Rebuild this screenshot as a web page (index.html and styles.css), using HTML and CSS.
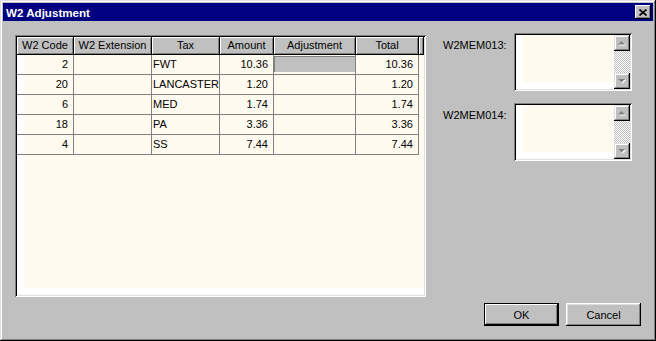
FILE: index.html
```html
<!DOCTYPE html>
<html lang="en">
<head>
    <meta charset="UTF-8">
    <title>W2 Adjustment</title>
    <link rel="stylesheet" href="styles.css">
</head>
<body>
    <div class="window">
        <div class="titlebar">
            <span class="title">W2 Adjustment</span>
            <div class="close-btn">
                <svg width="8" height="7" viewBox="0 0 8 7">
                    <path d="M0.5 0.5 L7.5 6.5 M7.5 0.5 L0.5 6.5" stroke="#000" stroke-width="1.6" fill="none"/>
                </svg>
            </div>
        </div>

        <div class="client">
            <div class="main-row">
                <div class="grid-frame">
                    <div class="grid">
                        <div class="head">W2 Code</div>
                        <div class="head">W2 Extension</div>
                        <div class="head">Tax</div>
                        <div class="head">Amount</div>
                        <div class="head">Adjustment</div>
                        <div class="head">Total</div>
                        <div class="head filler"></div>

                        <div class="cell num">2</div>
                        <div class="cell"></div>
                        <div class="cell text">FWT</div>
                        <div class="cell num">10.36</div>
                        <div class="cell edit"><div class="edit-box"></div></div>
                        <div class="cell num">10.36</div>
                        <div class="blank"></div>

                        <div class="cell num">20</div>
                        <div class="cell"></div>
                        <div class="cell text">LANCASTER</div>
                        <div class="cell num">1.20</div>
                        <div class="cell"></div>
                        <div class="cell num">1.20</div>
                        <div class="blank"></div>

                        <div class="cell num">6</div>
                        <div class="cell"></div>
                        <div class="cell text">MED</div>
                        <div class="cell num">1.74</div>
                        <div class="cell"></div>
                        <div class="cell num">1.74</div>
                        <div class="blank"></div>

                        <div class="cell num">18</div>
                        <div class="cell"></div>
                        <div class="cell text">PA</div>
                        <div class="cell num">3.36</div>
                        <div class="cell"></div>
                        <div class="cell num">3.36</div>
                        <div class="blank"></div>

                        <div class="cell num">4</div>
                        <div class="cell"></div>
                        <div class="cell text">SS</div>
                        <div class="cell num">7.44</div>
                        <div class="cell"></div>
                        <div class="cell num">7.44</div>
                        <div class="blank"></div>
                    </div>
                </div>

                <div class="memo-panel">
                    <div class="memo-row">
                        <span class="memo-label">W2MEM013:</span>
                        <div class="memo">
                            <div class="memo-text"></div>
                            <div class="scrollbar">
                                <div class="scroll-btn">
                                    <svg width="8" height="5" viewBox="0 0 8 5">
                                        <polygon points="4.5,1 8,4.5 1,4.5" fill="#fff"/>
                                        <polygon points="3.5,0 7,3.5 0,3.5" fill="#808080"/>
                                    </svg>
                                </div>
                                <div class="scroll-track"></div>
                                <div class="scroll-btn">
                                    <svg width="8" height="5" viewBox="0 0 8 5">
                                        <polygon points="1,1 8,1 4.5,4.5" fill="#fff"/>
                                        <polygon points="0,0 7,0 3.5,3.5" fill="#808080"/>
                                    </svg>
                                </div>
                            </div>
                        </div>
                    </div>
                    <div class="memo-row">
                        <span class="memo-label">W2MEM014:</span>
                        <div class="memo">
                            <div class="memo-text"></div>
                            <div class="scrollbar">
                                <div class="scroll-btn">
                                    <svg width="8" height="5" viewBox="0 0 8 5">
                                        <polygon points="4.5,1 8,4.5 1,4.5" fill="#fff"/>
                                        <polygon points="3.5,0 7,3.5 0,3.5" fill="#808080"/>
                                    </svg>
                                </div>
                                <div class="scroll-track"></div>
                                <div class="scroll-btn">
                                    <svg width="8" height="5" viewBox="0 0 8 5">
                                        <polygon points="1,1 8,1 4.5,4.5" fill="#fff"/>
                                        <polygon points="0,0 7,0 3.5,3.5" fill="#808080"/>
                                    </svg>
                                </div>
                            </div>
                        </div>
                    </div>
                </div>
            </div>

            <div class="button-row">
                <button class="btn btn-default">OK</button>
                <button class="btn">Cancel</button>
            </div>
        </div>
    </div>
</body>
</html>
```

FILE: styles.css
```css
body {
    margin: 0;
    padding: 0;
    background-color: #c0c0c0;
}

.window {
    width: 656px;
    height: 341px;
    box-sizing: border-box;
    padding: 3px;
    background-color: #c0c0c0;
    box-shadow: inset -1px -1px #000, inset 1px 1px #dfdfdf, inset -2px -2px #808080, inset 2px 2px #fff;
    display: flex;
    flex-direction: column;
    font-family: "Liberation Sans", Arial, sans-serif;
    font-size: 11px;
    color: #000;
}

.titlebar {
    height: 18px;
    background-color: #000080;
    display: flex;
    align-items: center;
    justify-content: space-between;
    padding: 0 2px 0 3px;
}

.title {
    color: #fff;
    font-weight: bold;
    font-size: 11.6px;
}

.close-btn {
    width: 16px;
    height: 14px;
    box-sizing: border-box;
    background-color: #c0c0c0;
    box-shadow: inset -1px -1px #000, inset 1px 1px #fff, inset -2px -2px #808080;
    display: flex;
    justify-content: center;
    align-items: center;
}

.client {
    flex: 1;
    display: flex;
    flex-direction: column;
    padding: 12px;
}

.main-row {
    display: flex;
    height: 264px;
}

/* grid */

.grid-frame {
    margin-top: 2px;
    width: 411px;
    height: 262px;
    box-sizing: border-box;
    padding: 2px;
    box-shadow: inset 1px 1px #808080, inset -1px -1px #fff, inset 2px 2px #000, inset -2px -2px #dfdfdf;
}

.grid {
    height: 100%;
    display: grid;
    grid-template-columns: 57px 78px 68px 54px 82px 63px 5px;
    grid-template-rows: 18px repeat(5, 20px);
    align-content: start;
    background: linear-gradient(#fffaef, #fffaef) 7px 0 / calc(100% - 7px) calc(100% - 7px) no-repeat, #fff;
}

.head {
    box-sizing: border-box;
    background-color: #c0c0c0;
    border-right: 1px solid #000;
    border-bottom: 1px solid #000;
    box-shadow: inset 1px 1px #fff, inset -1px -1px #808080;
    text-align: center;
    line-height: 17px;
}

.cell {
    box-sizing: border-box;
    border-right: 1px solid #808080;
    border-bottom: 1px solid #808080;
    line-height: 19px;
    white-space: nowrap;
    overflow: hidden;
}

.num {
    text-align: right;
    padding-right: 5px;
}

.text {
    padding-left: 1px;
}

.edit-box {
    height: 16px;
    margin-top: 1px;
    background-color: #c0c0c0;
    box-shadow: inset 1px 1px #808080;
}

/* memo fields */

.memo-panel {
    margin-left: 17px;
    display: flex;
    flex-direction: column;
    gap: 12px;
}

.memo-row {
    display: flex;
}

.memo-label {
    width: 71px;
    padding-top: 6px;
    line-height: 13px;
}

.memo {
    width: 118px;
    height: 58px;
    box-sizing: border-box;
    padding: 2px;
    box-shadow: inset 1px 1px #808080, inset -1px -1px #fff, inset 2px 2px #000, inset -2px -2px #dfdfdf;
    display: flex;
}

.memo-text {
    flex: 1;
    background: linear-gradient(#fffaef, #fffaef) 7px 0 / calc(100% - 7px) calc(100% - 7px) no-repeat, #fff;
}

.scrollbar {
    width: 16px;
    display: flex;
    flex-direction: column;
    background: repeating-conic-gradient(#c0c0c0 0 25%, #fff 0 50%) 0 0 / 2px 2px;
}

.scroll-btn {
    height: 16px;
    background-color: #c0c0c0;
    box-shadow: inset -1px -1px #000, inset 1px 1px #dfdfdf, inset -2px -2px #808080, inset 2px 2px #fff;
    display: flex;
    justify-content: center;
    align-items: center;
}

.scroll-track {
    flex: 1;
}

/* buttons */

.button-row {
    display: flex;
    justify-content: flex-end;
    gap: 7px;
    margin-top: 6px;
}

.btn {
    width: 75px;
    height: 23px;
    box-sizing: border-box;
    padding: 0;
    border: none;
    background-color: #c0c0c0;
    font-family: "Liberation Sans", Arial, sans-serif;
    font-size: 11px;
    color: #000;
    box-shadow: inset -1px -1px #000, inset 1px 1px #fff, inset -2px -2px #808080, inset 2px 2px #dfdfdf;
}

.btn-default {
    border: 1px solid #000;
    box-shadow: inset -1px -1px #000, inset 1px 1px #fff, inset -2px -2px #808080;
}
```
